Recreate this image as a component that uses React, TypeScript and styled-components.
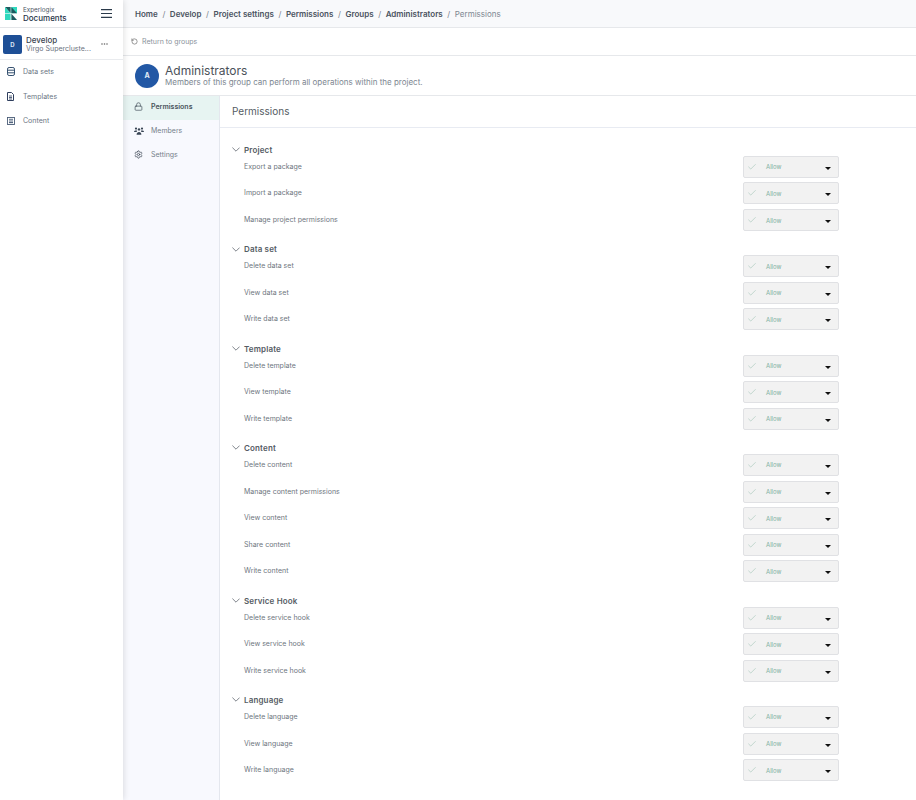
import React from 'react'
import styled, { createGlobalStyle } from 'styled-components'
import { Lock, Settings, Check, RotateCcw } from 'lucide-react'

const GlobalStyle = createGlobalStyle`
  html, body { margin: 0; padding: 0; background: #fff; }
  body { font-family: Inter, "Noto Sans", sans-serif; color: #343a40; }
`

const sections = [
  { title: 'Project', rows: ['Export a package', 'Import a package', 'Manage project permissions'] },
  { title: 'Data set', rows: ['Delete data set', 'View data set', 'Write data set'] },
  { title: 'Template', rows: ['Delete template', 'View template', 'Write template'] },
  { title: 'Content', rows: ['Delete content', 'Manage content permissions', 'View content', 'Share content', 'Write content'] },
  { title: 'Service Hook', rows: ['Delete service hook', 'View service hook', 'Write service hook'] },
  { title: 'Language', rows: ['Delete language', 'View language', 'Write language'] },
]

const crumbs = ['Home', 'Develop', 'Project settings', 'Permissions', 'Groups', 'Administrators']

const Logo = () => (
  <svg width="12" height="13" viewBox="0 0 12 13">
    <path d="M0 0h5.6v6.2z" fill="#1c5a5e" />
    <path d="M6.4 0H12v6.2H6.4z" fill="#2fd8bd" />
    <path d="M6.4 0L12 6.2H6.4z" fill="#1c5a5e" />
    <path d="M0 0l5.6 6.2H0z" fill="#2fd8bd" />
    <path d="M0 6.8h5.6V13H0z" fill="#2fd8bd" />
    <path d="M6.4 6.8L12 13H6.4z" fill="#1c5a5e" />
  </svg>
)

const BurgerIcon = () => (
  <svg width="11" height="9" viewBox="0 0 11 9">
    <path d="M0 .6h11M0 4.5h11M0 8.4h11" stroke="#2b3a4a" strokeWidth="1.1" />
  </svg>
)

const DotsIcon = () => (
  <svg width="7" height="2" viewBox="0 0 7 2">
    <circle cx="1" cy="1" r=".8" fill="#666" />
    <circle cx="3.5" cy="1" r=".8" fill="#666" />
    <circle cx="6" cy="1" r=".8" fill="#666" />
  </svg>
)

const DataIcon = () => (
  <svg width="8" height="9" viewBox="0 0 8 9" fill="none" stroke="#34506f" strokeWidth="1">
    <rect x=".5" y=".5" width="7" height="8" rx="1.6" />
    <path d="M.5 3.2h7M.5 5.8h7" />
  </svg>
)

const TemplateIcon = () => (
  <svg width="7" height="9" viewBox="0 0 7 9" fill="none" stroke="#2f3f5e" strokeWidth="1">
    <path d="M.5.5h4l2 2v6h-6z" />
    <path d="M2 4h3M2 5.5h3M2 7h3" strokeWidth=".8" />
  </svg>
)

const ContentIcon = () => (
  <svg width="8" height="8" viewBox="0 0 8 8" fill="none" stroke="#4a5d78" strokeWidth=".9">
    <rect x=".5" y=".5" width="7" height="7" />
    <path d="M2 2.3h4M2 4h4" />
    <path d="M2 5.6h4" strokeWidth="1.1" />
  </svg>
)

const MembersIcon = () => (
  <svg width="10" height="8" viewBox="0 0 10 8" fill="#3a4656">
    <circle cx="2" cy="1.6" r="1.1" />
    <circle cx="8" cy="1.6" r="1.1" />
    <circle cx="5" cy="2.4" r="1.2" />
    <path d="M0 5c0-1.2 1-1.6 2-1.6.5 0 .9.1 1.2.3L2.6 5z" />
    <path d="M10 5c0-1.2-1-1.6-2-1.6-.5 0-.9.1-1.2.3L7.4 5z" />
    <path d="M2.6 7.8c0-1.8 1.1-2.7 2.4-2.7s2.4.9 2.4 2.7z" />
  </svg>
)

const SectionChevron = () => (
  <svg width="8" height="5" viewBox="0 0 8 5" fill="none" stroke="#5f666e" strokeWidth=".8">
    <path d="M.4.6L4 4.2 7.6.6" />
  </svg>
)

const CaretIcon = () => (
  <svg width="6" height="3" viewBox="0 0 6 3">
    <path d="M0 0h6L3 3z" fill="#111" />
  </svg>
)

const App: React.FC = () => {
  return (
    <Page>
      <GlobalStyle />
      <Sidebar>
        <LogoBar>
          <Logo />
          <LogoText>
            <LogoSmall>Experlogix</LogoSmall>
            <LogoBig>Documents</LogoBig>
          </LogoText>
          <BurgerIcon />
        </LogoBar>
        <ProjectRow>
          <ProjectBadge>D</ProjectBadge>
          <ProjectText>
            <ProjectName>Develop</ProjectName>
            <ProjectSub>Virgo Supercluste...</ProjectSub>
          </ProjectText>
          <DotsIcon />
        </ProjectRow>
        <SideNav>
          <SideItem><IconSlot><DataIcon /></IconSlot>Data sets</SideItem>
          <SideItem><IconSlot><TemplateIcon /></IconSlot>Templates</SideItem>
          <SideItem><IconSlot><ContentIcon /></IconSlot>Content</SideItem>
        </SideNav>
      </Sidebar>
      <Main>
        <Breadcrumbs>
          {crumbs.map((c) => (
            <React.Fragment key={c}>
              <Crumb>{c}</Crumb>
              <Slash>/</Slash>
            </React.Fragment>
          ))}
          <CrumbLast>Permissions</CrumbLast>
        </Breadcrumbs>
        <ReturnRow><RotateCcw size={7} strokeWidth={2} />Return to groups</ReturnRow>
        <GroupHeader>
          <Avatar>A</Avatar>
          <div>
            <GroupTitle>Administrators</GroupTitle>
            <GroupDesc>Members of this group can perform all operations within the project.</GroupDesc>
          </div>
        </GroupHeader>
        <Body>
          <Tabs>
            <Tab $active><TabIcon><Lock size={9} strokeWidth={1.8} /></TabIcon>Permissions</Tab>
            <Tab><TabIcon><MembersIcon /></TabIcon>Members</Tab>
            <Tab><TabIcon><Settings size={9} strokeWidth={2} /></TabIcon>Settings</Tab>
          </Tabs>
          <Content>
            <ContentTitle>Permissions</ContentTitle>
            <Sections>
              {sections.map((s) => (
                <Section key={s.title}>
                  <SectionHead><SectionChevron />{s.title}</SectionHead>
                  {s.rows.map((r) => (
                    <Row key={r}>
                      <RowLabel>{r}</RowLabel>
                      <Select>
                        <Check size={10} strokeWidth={1.1} color="#86b5a2" />
                        <SelectText>Allow</SelectText>
                        <CaretIcon />
                      </Select>
                    </Row>
                  ))}
                </Section>
              ))}
            </Sections>
          </Content>
        </Body>
      </Main>
    </Page>
  )
}

export const Page = styled.div`
  display: flex;
  width: 916px;
  height: 800px;
  overflow: hidden;
`
export const Sidebar = styled.aside`
  width: 123px;
  flex: none;
  background: #fff;
  box-shadow: 1px 0 6px rgba(0, 0, 0, 0.12);
  position: relative;
  z-index: 1;
`
export const LogoBar = styled.div`
  height: 28px;
  box-sizing: border-box;
  border-bottom: 1px solid #e3e5e8;
  display: flex;
  align-items: center;
  padding: 0 11px 0 5px;
  gap: 6px;
`
export const LogoText = styled.div`
  display: flex;
  flex-direction: column;
  flex: 1;
  padding-top: 1px;
`
export const LogoSmall = styled.span`
  font-size: 6.3px;
  line-height: 7px;
  color: #4b5563;
`
export const LogoBig = styled.span`
  font-size: 8px;
  line-height: 8px;
  font-weight: 500;
  color: #1f3347;
`
export const ProjectRow = styled.div`
  height: 32px;
  box-sizing: border-box;
  border-bottom: 1px solid #e9ebee;
  display: flex;
  align-items: center;
  padding: 1px 15px 0 3px;
  gap: 4px;
`
export const ProjectBadge = styled.div`
  width: 19px;
  height: 19px;
  flex: none;
  border-radius: 2px;
  background: #1e4f96;
  color: #dfe8f5;
  font-size: 6px;
  font-weight: 700;
  display: flex;
  align-items: center;
  justify-content: center;
`
export const ProjectText = styled.div`
  flex: 1;
  min-width: 0;
  display: flex;
  flex-direction: column;
`
export const ProjectName = styled.span`
  font-size: 8px;
  font-weight: 500;
  line-height: 9px;
  color: #3b4450;
`
export const ProjectSub = styled.span`
  font-size: 7px;
  line-height: 8px;
  color: #6b7280;
  white-space: nowrap;
`
export const SideNav = styled.nav`
  margin-top: -0.4px;
`
export const SideItem = styled.div`
  height: 24.5px;
  display: flex;
  align-items: center;
  padding-left: 7px;
  font-size: 7px;
  color: #6b7684;
`
export const IconSlot = styled.span`
  width: 16px;
  display: flex;
  flex: none;
`
export const Main = styled.main`
  flex: 1;
  min-width: 0;
  display: flex;
  flex-direction: column;
`
export const Breadcrumbs = styled.div`
  height: 28px;
  flex: none;
  box-sizing: border-box;
  background: #f8f9fb;
  border-bottom: 1px solid #e6e8eb;
  display: flex;
  align-items: center;
  padding-left: 12px;
  gap: 4.6px;
  font-size: 8px;
`
export const Crumb = styled.span`
  font-weight: 600;
  color: #4a5360;
`
export const Slash = styled.span`
  color: #7a828c;
`
export const CrumbLast = styled.span`
  color: #7d8791;
`
export const ReturnRow = styled.div`
  height: 28px;
  flex: none;
  box-sizing: border-box;
  border-bottom: 1px solid #e6e8eb;
  display: flex;
  align-items: center;
  gap: 4px;
  padding-left: 8px;
  font-size: 7px;
  color: #8a929b;
  svg { color: #555; }
`
export const GroupHeader = styled.div`
  height: 40px;
  flex: none;
  box-sizing: border-box;
  border-bottom: 1px solid #e6e8eb;
  display: flex;
  align-items: center;
  gap: 6px;
  padding-left: 12px;
`
export const Avatar = styled.div`
  width: 24px;
  height: 24px;
  border-radius: 50%;
  background: #2258a5;
  color: #e4ecf7;
  font-size: 7px;
  font-weight: 700;
  display: flex;
  align-items: center;
  justify-content: center;
`
export const GroupTitle = styled.div`
  font-size: 12px;
  line-height: 13px;
  color: #4a5159;
`
export const GroupDesc = styled.div`
  font-size: 8px;
  line-height: 10px;
  color: #7d8791;
`
export const Body = styled.div`
  flex: 1;
  display: flex;
  min-height: 0;
`
export const Tabs = styled.div`
  width: 97px;
  flex: none;
  box-sizing: border-box;
  background: #f8f9fe;
  border-right: 1px solid #e4e7ee;
`
export const Tab = styled.div<{ $active?: boolean }>`
  height: 24px;
  display: flex;
  align-items: center;
  padding: 0 0 2.4px 11px;
  box-sizing: border-box;
  font-size: 7px;
  font-weight: ${(p) => (p.$active ? 600 : 400)};
  color: ${(p) => (p.$active ? '#49535c' : '#757f8a')};
  background: ${(p) => (p.$active ? '#e7f4f2' : 'transparent')};
`
export const TabIcon = styled.span`
  width: 17px;
  flex: none;
  display: flex;
  color: #3f4a57;
`
export const Content = styled.div`
  flex: 1;
  min-width: 0;
`
export const ContentTitle = styled.div`
  height: 32px;
  box-sizing: border-box;
  border-bottom: 1px solid #e8ebf2;
  display: flex;
  align-items: center;
  padding: 0 0 2px 12px;
  font-size: 10px;
  color: #555c64;
`
export const Sections = styled.div`
  padding: 15.85px 77px 0 12px;
`
export const Section = styled.section`
  margin-bottom: 7.6px;
`
export const SectionHead = styled.div`
  height: 12px;
  display: flex;
  align-items: center;
  gap: 4px;
  font-size: 8px;
  font-weight: 600;
  letter-spacing: 0.15px;
  color: #555c64;
`
export const Row = styled.div`
  height: 26.6px;
  display: flex;
  justify-content: space-between;
  align-items: flex-start;
`
export const RowLabel = styled.div`
  font-size: 7px;
  line-height: 22px;
  padding-left: 12px;
  color: #6e7680;
`
export const Select = styled.div`
  width: 96px;
  height: 22px;
  box-sizing: border-box;
  background: #f2f2f2;
  border: 1px solid #e0e1e4;
  border-radius: 2px;
  display: flex;
  align-items: center;
  padding: 0 7px 0 3px;
  svg:last-child { margin-top: 3px; }
`
export const SelectText = styled.span`
  flex: 1;
  margin-left: 9px;
  font-size: 6px;
  color: #7fb0a0;
`
export default App
